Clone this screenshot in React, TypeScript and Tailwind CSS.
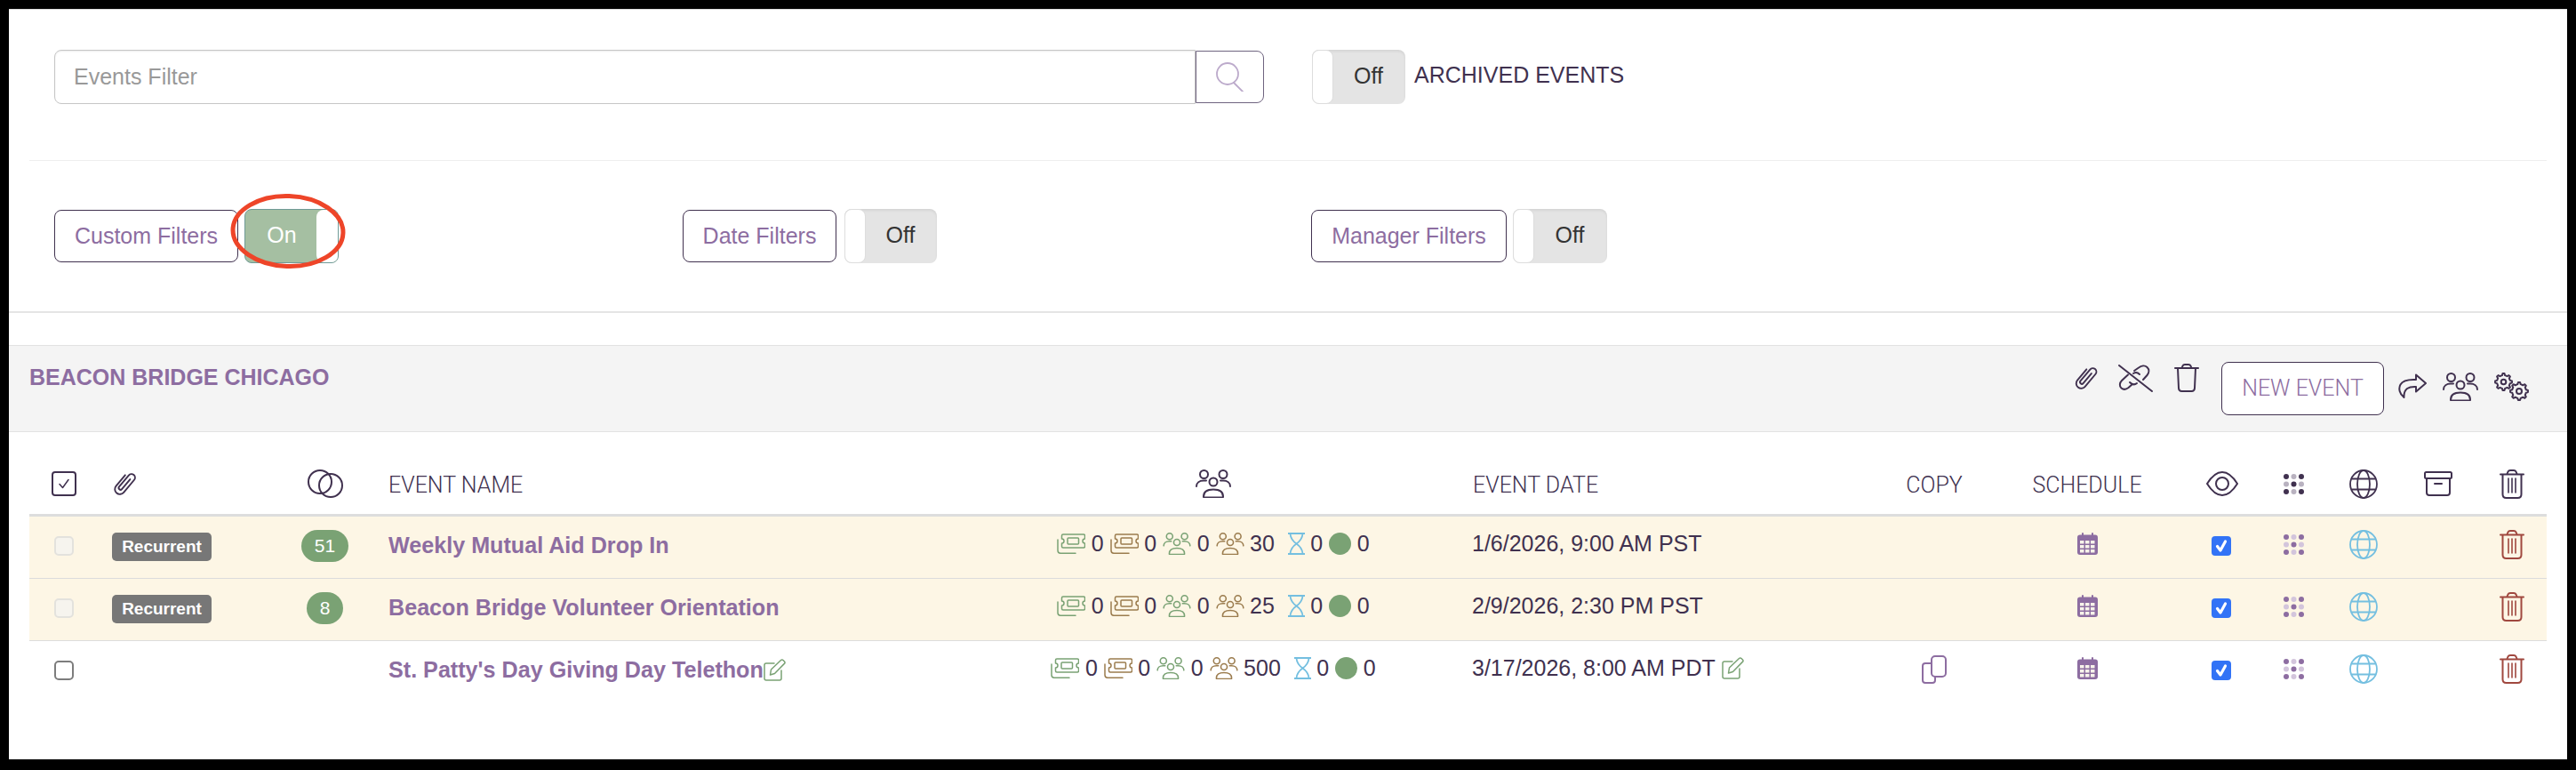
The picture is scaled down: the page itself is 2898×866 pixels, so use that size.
import React from "react";

const DARK = "#40314f";
const PURPLE = "#8d6da1";
const GREEN = "#7aa274";
const BROWN = "#9b7c4e";
const BLUE = "#74bfe0";
const RED = "#a0483f";

const COLS =
  "grid grid-cols-[78px_209px_91px_689px_530px_470px_152px_192px_112px_49px_107px_62px_91px]";

type IconProps = { c?: string; className?: string };

function Clip({ c = DARK, className = "w-[28px] h-[31px]" }: IconProps) {
  return (
    <svg viewBox="0 0 28 31" className={className} fill="none" stroke={c} strokeWidth="2" strokeLinecap="round" strokeLinejoin="round">
      <g transform="translate(14 15.500) rotate(40) scale(.8) translate(-8 -19)">
        <path d="M1 10V30a7 7 0 0 0 14 0V7a5 5 0 0 0-10 0V28a2.500 2.500 0 0 0 5 0V10" strokeWidth="2.400" />
      </g>
    </svg>
  );
}

function Unlink({ c = DARK }: IconProps) {
  return (
    <svg viewBox="0 0 39 31" className="w-[39px] h-[31px]" fill="none" stroke={c} strokeWidth="2" strokeLinecap="round" strokeLinejoin="round">
      <path d="M1 1 38 30" />
      <path d="M11 11.500 4 18c-2.500 2.500-3 6.500-.5 8.500s5.500 1.500 8-.5L16 22" />
      <path d="M13 20c2.500 2.500 5.500 3 8 1" />
      <path d="M18 7 23 3.500c3-2.300 7-2.800 9.500-.5s2.500 6 0 9L28 17" />
      <path d="M24 11c-2-2-4.500-2.500-7-1" />
    </svg>
  );
}

function TrashLid({ c = DARK }: IconProps) {
  return (
    <svg viewBox="0 0 28 32" className="w-[28px] h-[32px]" fill="none" stroke={c} strokeWidth="2" strokeLinecap="round" strokeLinejoin="round">
      <path d="M1 5h26" />
      <path d="M8.500 5 9.500 2.500C10 1.500 11 1 12 1h4c1 0 2 .5 2.500 1.500L19.500 5" />
      <path d="M4 5l1 22.500C5.100 29.500 6.500 31 8.500 31h11c2 0 3.400-1.500 3.500-3.500L24 5" />
    </svg>
  );
}

function Trash({ c = DARK }: IconProps) {
  return (
    <svg viewBox="0 0 28 33" className="w-[28px] h-[33px]" fill="none" stroke={c} strokeWidth="2" strokeLinecap="round" strokeLinejoin="round">
      <path d="M1 5.500h26" />
      <path d="M8.500 5 9.500 2.500C10 1.500 11 1 12 1h4c1 0 2 .5 2.500 1.500L19.500 5" />
      <path d="M3.500 6v22c0 2.500 1.500 4 4 4h13c2.500 0 4-1.500 4-4V6" />
      <path d="M10 10v16M14 10v16M18 10v16" strokeWidth="1.600" />
    </svg>
  );
}

function Share({ c = DARK }: IconProps) {
  return (
    <svg viewBox="0 0 32 28" className="w-[32px] h-[28px]" fill="none" stroke={c} strokeWidth="2" strokeLinecap="round" strokeLinejoin="round">
      <path d="M20 1.500 31 11 20 20.500V15C12 14.500 6 17 6.500 27 1.500 23 0 17 2.500 12.500S11 6.500 20 7Z" />
    </svg>
  );
}

function Users({ c = DARK, className = "w-[40px] h-[32px]" }: IconProps) {
  return (
    <svg viewBox="0 0 40 32" className={className} fill="none" stroke={c} strokeWidth="2" strokeLinecap="round" strokeLinejoin="round">
      <circle cx="9.500" cy="5.500" r="4.500" />
      <circle cx="31" cy="5.500" r="4.500" />
      <circle cx="20" cy="14" r="4.500" />
      <path d="M1 19c0-4 3.500-6.500 8-6.500h3" />
      <path d="M39 19c0-4-3.500-6.500-8-6.500h-3" />
      <path d="M9 30.500c0-5 4-8 11-8s11 3 11 8c0 .5-.5 1-1 1H10c-.5 0-1-.5-1-1Z" />
    </svg>
  );
}

function gearPath(cx: number, cy: number, r1: number, r2: number, teeth = 8) {
  const pts: string[] = [];
  for (let i = 0; i < teeth; i++) {
    const a = (i / teeth) * Math.PI * 2;
    const w = Math.PI / teeth / 2;
    const seq: [number, number][] = [
      [a - w * 1.100, r2],
      [a - w * 0.550, r1],
      [a + w * 0.550, r1],
      [a + w * 1.100, r2],
    ];
    for (const [t, r] of seq) pts.push(`${(cx + Math.cos(t) * r).toFixed(2)} ${(cy + Math.sin(t) * r).toFixed(2)}`);
  }
  return "M" + pts.join("L") + "Z";
}

function Gears({ c = DARK }: IconProps) {
  return (
    <svg viewBox="0 0 39 32" className="w-[39px] h-[32px]" fill="none" stroke={c} strokeWidth="2" strokeLinejoin="round">
      <path d={gearPath(10.500, 10.500, 9.500, 7.500)} />
      <circle cx="10.500" cy="10.500" r="2.800" />
      <path d={gearPath(28, 21, 10, 8)} />
      <circle cx="28" cy="21" r="3" />
    </svg>
  );
}

function Tickets({ c }: { c: string }) {
  return (
    <svg viewBox="0 0 32 23" className="w-[32px] h-[23px] shrink-0" fill="none" stroke={c} strokeWidth="1.500" strokeLinecap="round" strokeLinejoin="round">
      <path d="M7 1h23c1 0 1.500.5 1.500 1.500V6c-1.500 0-2.500 1-2.500 2.500s1 2.500 2.500 2.500v3.500c0 1-.5 1.500-1.500 1.500H7c-1 0-1.500-.5-1.500-1.500V11C7 11 8 10 8 8.500S7 6 5.500 6V2.500C5.500 1.500 6 1 7 1Z" />
      <rect x="12" y="5" width="12.500" height="7" rx="1" />
      <path d="M1 7v12c0 2 1 3.200 3 3.200h17" />
    </svg>
  );
}

function Hourglass() {
  return (
    <svg viewBox="0 0 19 25" className="w-[19px] h-[25px] shrink-0" fill="none" stroke={BLUE} strokeWidth="1.800" strokeLinejoin="round">
      <path d="M0 1h19M0 24h19" />
      <path d="M2.500 1.500C3 7 6 10 9.500 12.500 6 15 3 18 2.500 23.500M16.500 1.500C16 7 13 10 9.500 12.500 13 15 16 18 16.500 23.500" />
    </svg>
  );
}

function Stat({ icon, v }: { icon: React.ReactNode; v: string }) {
  return (
    <span className="flex items-center gap-[6.500px]">
      {icon}
      <span>{v}</span>
    </span>
  );
}

function Dots({ a, b }: { a: string; b: string }) {
  const all: [number, number, string][] = [];
  for (let y = 0; y < 3; y++)
    for (let x = 0; x < 3; x++) all.push([x, y, (x + y) % 2 === 0 ? a : b]);
  return (
    <svg viewBox="0 0 23 23" className="w-[23px] h-[23px]">
      {all.map(([x, y, f]) => (
        <circle key={`${x}${y}`} cx={3 + x * 8.500} cy={3 + y * 8.500} r="3" fill={f} />
      ))}
    </svg>
  );
}

function Globe({ c }: { c: string }) {
  return (
    <svg viewBox="0 0 32 33" className="w-[32px] h-[33px]" fill="none" stroke={c} strokeWidth="1.800">
      <ellipse cx="16" cy="16.500" rx="15" ry="15.500" />
      <ellipse cx="16" cy="16.500" rx="7" ry="15.500" />
      <path d="M2.500 10.500h27M2.500 22.500h27" />
    </svg>
  );
}

function Calendar() {
  return (
    <svg viewBox="0 0 23 25" className="w-[23px] h-[25px]">
      <rect x="0" y="2.500" width="23" height="22.500" rx="3" fill={PURPLE} />
      <rect x="5" y="0" width="2" height="5" rx="1" fill={PURPLE} />
      <rect x="16" y="0" width="2" height="5" rx="1" fill={PURPLE} />
      {[9, 14, 19].flatMap((y) =>
        [3, 9, 15].map((x) => <rect key={`${x}-${y}`} x={x} y={y} width="4.500" height="3.500" fill="#f7f3ea" />)
      )}
    </svg>
  );
}

function Edit() {
  return (
    <svg viewBox="0 0 25 25" className="w-[25px] h-[25px] shrink-0" fill="none" stroke={GREEN} strokeWidth="1.500" strokeLinecap="round" strokeLinejoin="round">
      <path d="M12 5H3C1.800 5 1 5.800 1 7v15c0 1.200.8 2 2 2h15c1.200 0 2-.8 2-2V13" />
      <path d="M8.500 12 19.500 1.500c.8-.7 1.800-.7 2.500 0l1.500 1.500c.6.7.6 1.700-.1 2.400L12.500 16.500 7.500 18Z" />
    </svg>
  );
}

function Copy() {
  return (
    <svg viewBox="0 0 28 32" className="w-[28px] h-[32px]" fill="none" stroke={PURPLE} strokeWidth="2" strokeLinejoin="round">
      <rect x="11" y="1" width="16" height="23" rx="4" />
      <path d="M11 9H4C2 9 1 10 1 12v16c0 2 1 3 3 3h8c2 0 3-1 3-3v-4" />
    </svg>
  );
}

function Blue() {
  return (
    <span className="mt-[22px] flex h-[22px] w-[22px] items-center justify-center rounded-[4px] bg-[#3273f6]">
      <svg viewBox="0 0 22 22" className="h-[22px] w-[22px]" fill="none" stroke="#fff" strokeWidth="3.200" strokeLinecap="round" strokeLinejoin="round">
        <path d="M6.500 11.500 10 16l5.500-10" />
      </svg>
    </span>
  );
}

function ToggleOff({ w }: { w: string }) {
  return (
    <div className={`flex h-[61px] ${w} rounded-[8px] bg-[#e4e4e4] shadow-[inset_0_2px_3px_rgba(0,0,0,0.07)]`}>
      <span className="h-full w-[24px] rounded-[8px] border border-[#ddd] bg-white" />
      <span className="flex flex-1 items-center justify-center pb-[2px] pr-[2px] text-[#333]">Off</span>
    </div>
  );
}

function FilterButton({ w, children }: { w: string; children: React.ReactNode }) {
  return (
    <button className={`flex h-[59px] ${w} items-center justify-center rounded-[8px] border border-[#40314f] bg-white text-[#8d6da1]`}>
      {children}
    </button>
  );
}

type RowData = {
  tint: boolean;
  count?: string;
  countW?: string;
  name: string;
  edit?: boolean;
  s: string;
  date: string;
  copy?: boolean;
};

const rows: RowData[] = [
  { tint: true, count: "51", countW: "w-[53px]", name: "Weekly Mutual Aid Drop In", s: "30", date: "1/6/2026, 9:00 AM PST" },
  { tint: true, count: "8", countW: "w-[41px]", name: "Beacon Bridge Volunteer Orientation", s: "25", date: "2/9/2026, 2:30 PM PST" },
  { tint: false, name: "St. Patty's Day Giving Day Telethon", edit: true, s: "500", date: "3/17/2026, 8:00 AM PDT", copy: true },
];

function Row({ r }: { r: RowData }) {
  return (
    <div className={`${COLS} h-[70px] items-start ${r.tint ? "border-b border-[#dcdcdc] bg-[#fdf6e5]" : ""}`}>
      <div className="flex justify-center">
        <span
          className={`mt-[22px] block h-[22px] w-[22px] rounded-[5px] border-2 ${
            r.tint ? "border-[#e3e2dd] bg-[#f6f4ee]" : "border-[#7d7d7d] bg-white"
          }`}
        />
      </div>
      <div className="pl-[15px]">
        {r.tint && (
          <span className="mt-[18px] flex h-[32px] w-[112px] items-center justify-center rounded-[5px] bg-[#777] text-[19px] font-bold text-white">
            Recurrent
          </span>
        )}
      </div>
      <div className="flex justify-center">
        {r.count && (
          <span className={`mt-[15px] flex h-[36px] ${r.countW} items-center justify-center rounded-full bg-[#7aa274] text-[21px] text-white`}>
            {r.count}
          </span>
        )}
      </div>
      <div className="mt-[17px] flex items-center pl-[26px] text-[25.150px] font-bold leading-[30px] text-[#8d6da1]">
        {r.name}
        {r.edit && <Edit />}
      </div>
      <div className="mt-[18px] flex h-[25px] items-center justify-center gap-[7px] leading-[25px] text-[#40314f]">
        <Stat icon={<Tickets c={GREEN} />} v="0" />
        <Stat icon={<Tickets c={BROWN} />} v="0" />
        <Stat icon={<Users c={GREEN} className="h-[25px] w-[32px] shrink-0" />} v="0" />
        <Stat icon={<Users c={BROWN} className="h-[25px] w-[32px] shrink-0" />} v={r.s} />
        <span className="ml-[8px]">
          <Stat icon={<Hourglass />} v="0" />
        </span>
        <Stat icon={<span className="h-[25px] w-[25px] shrink-0 rounded-full bg-[#7aa274]" />} v="0" />
      </div>
      <div className="mt-[18px] flex h-[25px] items-center gap-[7px] pl-[26px] leading-[25px] text-[#40314f]">
        {r.date}
        {r.edit && <Edit />}
      </div>
      <div className="flex justify-center">{r.copy && <span className="mt-[16px]"><Copy /></span>}</div>
      <div className="mt-[18px] flex justify-center">
        <Calendar />
      </div>
      <div className="flex justify-center pr-[2px]">
        <Blue />
      </div>
      <div className="mt-[20px] flex justify-center">
        <Dots a={PURPLE} b="#d3c5dc" />
      </div>
      <div className="mt-[15px] flex justify-center">
        <Globe c={BLUE} />
      </div>
      <div />
      <div className="mt-[15px] flex justify-center pl-[13px]">
        <Trash c={RED} />
      </div>
    </div>
  );
}

export default function App() {
  return (
    <div className="relative h-[866px] w-[2898px] overflow-hidden bg-black px-[10px] pb-[12px] pt-[10px] font-['Liberation_Sans',Arial,sans-serif] text-[25px] text-[#40314f]">
      <main className="h-[844px] border-t border-[#ddd] bg-white">
        <section className="flex h-[169px] items-start pl-[51px] pt-[45px]">
          <input
            placeholder="Events Filter"
            className="h-[61px] w-[1284px] rounded-l-[8px] border border-[#c6c6c6] bg-white pl-[21px] shadow-[inset_0_1px_2px_rgba(0,0,0,0.08)] outline-none placeholder:text-[#999]"
          />
          <button className="mt-[1px] flex h-[59px] w-[77px] items-center justify-center rounded-r-[8px] border border-[#6f6480] bg-white">
            <svg viewBox="0 0 31 33" className="h-[33px] w-[31px]" fill="none" stroke="#bcaacb" strokeWidth="1.800" strokeLinecap="round">
              <circle cx="13" cy="13" r="12" />
              <path d="M20 23 30 33" />
            </svg>
          </button>
          <div className="ml-[54px] flex">
            <ToggleOff w="w-[105px]" />
            <span className="ml-[10px] mt-[13px] leading-[30px]">ARCHIVED EVENTS</span>
          </div>
        </section>

        <div className="mx-[23px] h-px bg-[#eee]" />

        <section className="grid h-[171px] grid-cols-[707px_707px_1fr] items-start border-b-2 border-[#e5e5e5] pl-[51px] pt-[54px]">
          <div className="flex items-center gap-[7px]">
            <FilterButton w="w-[207px]">Custom Filters</FilterButton>
            <div className="flex h-[61px] w-[106px] overflow-hidden rounded-[8px] border border-[#6f9a96] bg-[#a5bfa2]">
              <span className="flex flex-1 items-center justify-center pb-[2px] pl-[2px] text-white">On</span>
              <span className="h-full w-[24px] rounded-l-[8px] bg-white" />
            </div>
          </div>
          <div className="flex items-center gap-[9px]">
            <FilterButton w="w-[173px]">Date Filters</FilterButton>
            <ToggleOff w="w-[104px]" />
          </div>
          <div className="flex items-center gap-[7px]">
            <FilterButton w="w-[220px]">Manager Filters</FilterButton>
            <ToggleOff w="w-[106px]" />
          </div>
        </section>

        <section className="mt-[36px] flex h-[98px] items-start justify-between border-y border-[#e2e2e2] bg-[#f4f4f4] pl-[23px] pr-[43px]">
          <h2 className="mt-[20px] text-[25px] font-bold leading-[30px] text-[#8d6da1]">BEACON BRIDGE CHICAGO</h2>
          <div className="flex items-start">
            <span className="mt-[20px]"><Clip /></span>
            <span className="ml-[22px] mt-[21px]"><Unlink /></span>
            <span className="ml-[24px] mt-[20px]"><TrashLid /></span>
            <button className="ml-[25px] mt-[18px] flex h-[60px] w-[183px] items-center justify-center rounded-[8px] border border-[#40314f] bg-white font-['Roboto',sans-serif] text-[25px] font-light text-[#8d6da1]">
              NEW EVENT
            </button>
            <span className="ml-[16px] mt-[31px]"><Share /></span>
            <span className="ml-[18px] mt-[30px]"><Users /></span>
            <span className="ml-[18px] mt-[30px]"><Gears /></span>
          </div>
        </section>

        <div className="mx-[23px]">
          <div className={`${COLS} h-[95px] border-b-[3px] border-[#ddd] pt-[42px] font-['Roboto',sans-serif] text-[25px] font-light leading-[32px]`}>
            <div className="flex justify-center">
              <svg viewBox="0 0 28 28" className="mt-[2px] h-[28px] w-[28px]" fill="none" stroke={DARK} strokeWidth="2" strokeLinecap="round" strokeLinejoin="round">
                <rect x="1" y="1" width="26" height="26" rx="3" />
                <path d="M9 14.500 12.500 18.500 19 9.500" strokeWidth="1.500" />
              </svg>
            </div>
            <div className="pl-[15px]"><Clip className="h-[31px] w-[29px]" /></div>
            <div className="flex justify-center">
              <svg viewBox="0 0 40 32" className="h-[32px] w-[40px]" fill="none" stroke={DARK} strokeWidth="2">
                <circle cx="14" cy="14" r="13" />
                <circle cx="26" cy="18" r="13" />
              </svg>
            </div>
            <div className="pl-[26px] pt-[2px]">EVENT NAME</div>
            <div className="flex justify-center"><Users /></div>
            <div className="pl-[27px] pt-[2px]">EVENT DATE</div>
            <div className="pt-[2px] text-center">COPY</div>
            <div className="pt-[2px] text-center">SCHEDULE</div>
            <div className="flex justify-center">
              <svg viewBox="0 0 36 28" className="mt-[2px] h-[28px] w-[36px]" fill="none" stroke={DARK} strokeWidth="2" strokeLinejoin="round">
                <path d="M1 14C6 6 11 1 18 1s12 5 17 13c-5 8-10 13-17 13S6 22 1 14Z" />
                <circle cx="18" cy="14" r="7" />
              </svg>
            </div>
            <div className="flex justify-center pt-[5px]"><Dots a={DARK} b="#b9b2c0" /></div>
            <div className="flex justify-center"><Globe c={DARK} /></div>
            <div className="flex justify-center">
              <svg viewBox="0 0 32 28" className="mt-[2px] h-[28px] w-[32px]" fill="none" stroke={DARK} strokeWidth="2" strokeLinecap="round" strokeLinejoin="round">
                <rect x="1" y="1" width="30" height="7" rx="1.500" />
                <path d="M3 8v16c0 2 1 3 3 3h20c2 0 3-1 3-3V8M12 14h8" />
              </svg>
            </div>
            <div className="flex justify-center pl-[13px]"><Trash /></div>
          </div>
          {rows.map((r) => (
            <Row key={r.name} r={r} />
          ))}
        </div>
      </main>
      <svg viewBox="0 0 130 86" className="absolute left-[259px] top-[217px] h-[86px] w-[130px]" fill="none" stroke="#ee4529" strokeWidth="5">
        <ellipse cx="65" cy="43" rx="62" ry="39.500" transform="rotate(2 65 43)" />
      </svg>
    </div>
  );
}
